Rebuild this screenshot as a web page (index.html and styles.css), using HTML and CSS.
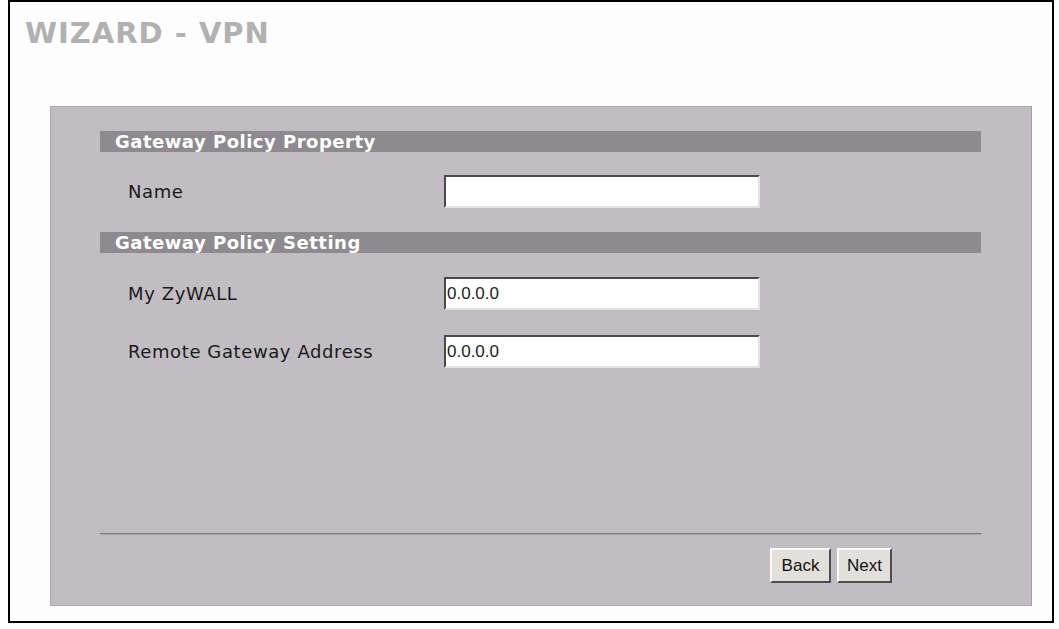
FILE: index.html
```html
<!DOCTYPE html>
<html lang="en">
<head>
  <meta charset="UTF-8" />
  <title>Wizard - VPN</title>
  <link rel="stylesheet" href="styles.css">
</head>
<body>
  <div class="frame">
    <h1 class="page-title">WIZARD - VPN</h1>

    <form class="panel" onsubmit="return false">
      <!-- Gateway policy property -->
      <div class="section-bar">Gateway Policy Property</div>
      <div class="field-row first">
        <label for="gwName">Name</label>
        <input type="text" id="gwName" value="">
      </div>

      <!-- Gateway policy setting -->
      <div class="section-bar">Gateway Policy Setting</div>
      <div class="field-row second">
        <label for="myZywall">My ZyWALL</label>
        <input type="text" id="myZywall" value="0.0.0.0">
      </div>
      <div class="field-row">
        <label for="remoteGw">Remote Gateway Address</label>
        <input type="text" id="remoteGw" value="0.0.0.0">
      </div>

      <div class="footer">
        <div class="separator"></div>
        <div class="button-group">
          <button type="button">Back</button>
          <button type="button">Next</button>
        </div>
      </div>
    </form>
  </div>
</body>
</html>
```

FILE: styles.css
```css
html, body {
  margin: 0;
  padding: 0;
}
body {
  background: #fff;
  font-family: "DejaVu Sans", Verdana, sans-serif;
  color: #1a1a1a;
}
/* Black frame round the whole screen */
.frame {
  box-sizing: border-box;
  width: 1046px;
  height: 623px;
  margin-left: 8px;
  border: 2px solid #000;
  padding: 17px 0 0 15px;
  background: #fdfdfd;
}
.page-title {
  margin: 0;
  font-size: 29px;
  line-height: 29px;
  font-weight: bold;
  letter-spacing: 1px;
  color: #b1b1b1;
}
/* Gray wizard panel (flex column, so margins don't collapse) */
.panel {
  box-sizing: border-box;
  display: flex;
  flex-direction: column;
  width: 982px;
  height: 500px;
  margin: 58px 0 0 25px;
  padding: 24px 50px 22px 49px;
  background: #c1bdc2;
  border: 1px solid #aaa7ab;
  border-right-color: #a3a0a4;
}
.section-bar {
  height: 21px;
  line-height: 21px;
  padding-left: 15px;
  background: #8e8a8f;
  color: #fff;
  font-size: 18px;
  font-weight: bold;
  letter-spacing: 0.5px;
  white-space: nowrap;
}
.field-row {
  display: flex;
  align-items: center;
  padding-left: 28px;
  margin: 1px 0 24px;
}
.field-row.first {
  margin-top: 23px;
}
.field-row.second {
  margin-top: 24px;
}
.field-row label {
  width: 316px;
  font-size: 18px;
  letter-spacing: 0.6px;
  color: #1a1a1a;
}
.field-row input {
  box-sizing: border-box;
  width: 316px;
  height: 33px;
  padding: 0 2px 0 1px;
  border: 2px solid;
  border-color: #4a4a4a #e4e2e4 #e4e2e4 #4a4a4a;
  background: #fff;
  font-family: "Liberation Sans", Arial, sans-serif;
  font-size: 17px;
  color: #222;
  outline: none;
}
/* Bottom line and buttons */
.footer {
  margin-top: auto;
}
.separator {
  border-top: 1px solid #7e7c7f;
  border-bottom: 1px solid #a9a6aa;
}
.button-group {
  display: flex;
  justify-content: flex-end;
  gap: 6px;
  margin: 13px 89px 0 0;
}
.button-group button {
  box-sizing: border-box;
  height: 35px;
  padding: 0 6px;
  border: 2px solid;
  border-color: #fafafa #4e4c4e #4e4c4e #fafafa;
  background: #e3dfdb;
  font-family: "Liberation Sans", Arial, sans-serif;
  font-size: 17px;
  color: #111;
  cursor: pointer;
}
.button-group button:first-child {
  width: 61px;
}
.button-group button:last-child {
  width: 55px;
}
```
